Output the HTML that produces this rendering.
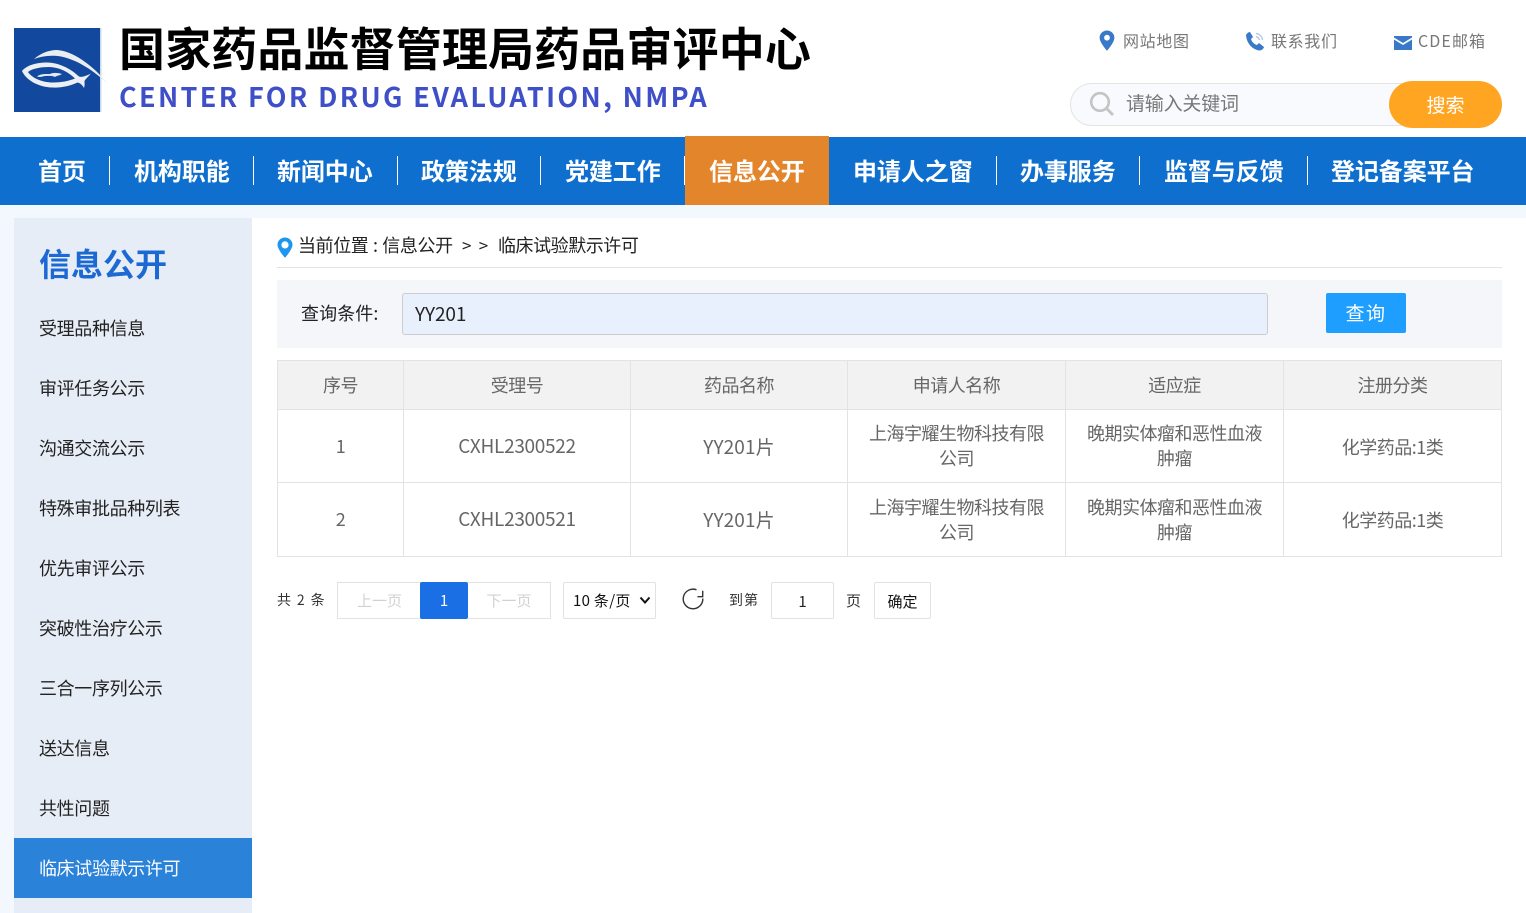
<!DOCTYPE html>
<html lang="zh-CN"><head><meta charset="utf-8"><title>临床试验默示许可</title>
<style>
*{box-sizing:border-box}
html,body{margin:0;padding:0}
body{width:1526px;height:913px;position:relative;overflow:hidden;background:#fff;font-family:"Noto Sans CJK SC","Liberation Sans",sans-serif;color:#333}
.a{position:absolute;white-space:nowrap}
.nav{position:absolute;left:0;top:137px;width:1526px;height:68px;background:#0f6fce}
.ni{position:absolute;top:153px;height:34px;line-height:34px;color:#fff;font-size:24px;font-weight:700;letter-spacing:-.1px;text-align:center;white-space:nowrap}
.sep{position:absolute;top:156px;width:1px;height:29px;background:#fff}
.s{position:absolute;left:39px;font-size:18px;line-height:26px;letter-spacing:-.35px;color:#222;white-space:nowrap}
.c{position:absolute;border-right:1px solid #e3e3e3;border-bottom:1px solid #e3e3e3;display:flex;align-items:center;justify-content:center;text-align:center;font-size:18px;line-height:25px;color:#666;letter-spacing:-.5px;padding:0 18px}
.h{background:#f2f2f2;color:#666}
.p{position:absolute;font-size:14px;white-space:nowrap;text-align:center}
.l{font-size:19px;letter-spacing:-.3px;position:relative;top:-1px}
.y{font-size:19px;letter-spacing:.1px}
.k{position:relative;top:1px}
</style></head><body>

<svg class="a" style="left:14px;top:28px" width="96" height="86" viewBox="0 0 96 86">
<rect width="86" height="84" fill="#12489d"/>
<rect x="86" width="1.500" height="84" fill="#c9d8ec"/>
<path d="M20 31C27 25 35 22 43 22C58 23 78 36 94 56C80 43 64 32 47 28.500C37 27 28 28 20 31Z" fill="#e9edf2"/>
<path d="M8 43C13 37 23 34.500 33 34.500C44 34.500 56 40 65 48.500C68 49.500 72 48 77 45.500C74 49 71.500 51 70.500 53C70.500 55 71 57 70 60C68.500 57 66 55 63.500 54.500C56 58 47 60 38 59.500C24 59 12 52 8 43ZM14 44C18 50 28 54.500 39 54.500C47 54.500 55 53 61 50.500C54 43.500 44 39 35 39C27 39 18 40.500 14 44Z" fill="#eceff3"/>
<path d="M23 48.500C27 45.500 31 46 36 46C39 44.500 43 44.500 48 46C46 47.500 43 47.500 41 49C38 47.500 35 48 31 48C28 48.500 26 49.500 23 48.500Z" fill="#e4e9f0"/>
</svg>
<div class="a" style="left:119px;top:15px;font-size:46px;line-height:64px;font-weight:700;color:#000;letter-spacing:.13px">国家药品监督管理局药品审评中心</div>
<div class="a" style="left:119px;top:79px;font-size:27px;line-height:34px;font-weight:700;color:#3e4fc7;letter-spacing:2.340px">CENTER FOR DRUG EVALUATION, NMPA</div>

<svg class="a" style="left:1099px;top:30px" width="16" height="21" viewBox="0 0 16 21"><path d="M8 0.5C3.8 0.5 0.6 3.7 0.6 7.8C0.6 12.6 8 20.8 8 20.8S15.4 12.6 15.4 7.8C15.4 3.7 12.2 0.5 8 0.500ZM8 10.600A2.900 2.900 0 1 1 8 4.800A2.900 2.900 0 0 1 8 10.600Z" fill="#3a78c9"/></svg>
<div class="a" style="left:1123px;top:29px;font-size:16px;line-height:23px;color:#777;letter-spacing:.65px">网站地图</div>
<svg class="a" style="left:1245px;top:31px" width="20" height="20" viewBox="0 0 20 20"><path d="M1 4C2 2 3.500 1 5 1L8 6L6 8C7 11 9 13 12 14L14 12L19 16C18.500 18 16.500 19.500 14.500 19.500C7 18.500 1.500 12 1 4Z" fill="#3a78c9"/><path d="M11 2.500C14.500 3 17 5.500 17.500 9M11 5.500C12.800 6 14 7.200 14.500 9" fill="none" stroke="#a9c4e6" stroke-width="1.300"/></svg>
<div class="a" style="left:1271px;top:29px;font-size:16px;line-height:23px;color:#777;letter-spacing:.65px">联系我们</div>
<svg class="a" style="left:1394px;top:36px" width="18" height="14" viewBox="0 0 18 14"><path d="M0 0H18V1.500L9 7L0 1.500Z" fill="#3a78c9"/><path d="M0 3.500L9 9L18 3.500V14H0Z" fill="#3a78c9"/></svg>
<div class="a" style="left:1418px;top:29px;font-size:16px;line-height:23px;color:#777;letter-spacing:1.100px">CDE邮箱</div>

<div class="a" style="left:1070px;top:83px;width:420px;height:43px;border:1px solid #e3e3e3;border-radius:22px;background:#f8fafe"></div>
<svg class="a" style="left:1089px;top:91px" width="26" height="26" viewBox="0 0 26 26"><circle cx="11" cy="11" r="8.800" fill="none" stroke="#c4c4c4" stroke-width="2.600"/><path d="M18 18L24 24" stroke="#c4c4c4" stroke-width="2.800"/></svg>
<div class="a" style="left:1126px;top:89px;font-size:19px;line-height:28px;color:#777;letter-spacing:-.2px">请输入关键词</div>
<div class="a" style="left:1389px;top:81px;width:113px;height:47px;border-radius:24px;background:#ffa522;color:#fff;font-size:19px;line-height:47px;text-align:center">搜索</div>

<div class="nav"></div>
<div class="a" style="left:685px;top:136px;width:144px;height:69px;background:#e3852b"></div>
<div class="ni" style="left:38px">首页</div><div class="sep" style="left:109px"></div>
<div class="ni" style="left:134px">机构职能</div><div class="sep" style="left:253px"></div>
<div class="ni" style="left:277px">新闻中心</div><div class="sep" style="left:397px"></div>
<div class="ni" style="left:421px">政策法规</div><div class="sep" style="left:540px"></div>
<div class="ni" style="left:565px">党建工作</div><div class="sep" style="left:684px"></div>
<div class="ni" style="left:709px">信息公开</div>
<div class="ni" style="left:853px">申请人之窗</div><div class="sep" style="left:996px"></div>
<div class="ni" style="left:1020px">办事服务</div><div class="sep" style="left:1139px"></div>
<div class="ni" style="left:1164px">监督与反馈</div><div class="sep" style="left:1307px"></div>
<div class="ni" style="left:1331px">登记备案平台</div>

<div class="a" style="left:0;top:205px;width:1526px;height:13px;background:#f3f8fe"></div>
<div class="a" style="left:0;top:218px;width:14px;height:695px;background:#f3f8fe"></div>
<div class="a" style="left:14px;top:218px;width:238px;height:695px;background:#e7edf6"></div>
<div class="a" style="left:39px;top:241px;font-size:32px;line-height:44px;font-weight:700;color:#1c69d4">信息公开</div>
<div class="s" style="top:315px">受理品种信息</div>
<div class="s" style="top:375px">审评任务公示</div>
<div class="s" style="top:435px">沟通交流公示</div>
<div class="s" style="top:495px">特殊审批品种列表</div>
<div class="s" style="top:555px">优先审评公示</div>
<div class="s" style="top:615px">突破性治疗公示</div>
<div class="s" style="top:675px">三合一序列公示</div>
<div class="s" style="top:735px">送达信息</div>
<div class="s" style="top:795px">共性问题</div>
<div class="a" style="left:14px;top:838px;width:238px;height:60px;background:#2a82d9"></div>
<div class="s" style="top:855px;color:#fff">临床试验默示许可</div>

<svg class="a" style="left:277px;top:237px" width="16" height="21" viewBox="0 0 16 21"><path d="M8 0.500C3.800 0.500 0.500 3.700 0.500 7.800C0.500 12.600 8 20.800 8 20.800S15.500 12.600 15.500 7.800C15.500 3.700 12.200 0.500 8 0.500ZM8 11.500A3.600 3.600 0 1 1 8 4.300A3.600 3.600 0 0 1 8 11.500Z" fill="#1e96f0"/></svg>
<div class="a" style="left:298px;top:232px;font-size:18px;line-height:26px;color:#222;letter-spacing:-.4px;word-spacing:1px">当前位置 : 信息公开</div>
<div class="a" style="left:462px;top:232px;font-size:17px;line-height:26px;color:#222;word-spacing:3.500px">&gt; &gt;</div>
<div class="a" style="left:498px;top:232px;font-size:18px;line-height:26px;color:#222;letter-spacing:-.45px">临床试验默示许可</div>
<div class="a" style="left:277px;top:267px;width:1225px;height:1px;background:#e3e3e3"></div>

<div class="a" style="left:277px;top:280px;width:1225px;height:68px;background:#f4f6fa"></div>
<div class="a" style="left:301px;top:300px;font-size:18px;line-height:26px;color:#222;letter-spacing:.1px">查询条件:</div>
<div class="a" style="left:402px;top:293px;width:866px;height:42px;background:#e8f0fe;border:1px solid #ccc;border-radius:3px;font-size:19px;line-height:39px;padding-left:12px;color:#222;letter-spacing:-.1px">YY201</div>
<div class="a" style="left:1326px;top:293px;width:80px;height:40px;background:#1e9fff;color:#fff;font-size:19px;line-height:39px;text-align:center;border-radius:2px;letter-spacing:1.500px">查询</div>

<div class="a" style="left:277px;top:360px;width:1225px;height:197px;border-left:1px solid #e3e3e3;border-top:1px solid #e3e3e3"></div>
<div class="c h" style="left:278px;top:361px;width:126px;height:49px">序号</div>
<div class="c h" style="left:404px;top:361px;width:227px;height:49px">受理号</div>
<div class="c h" style="left:631px;top:361px;width:217px;height:49px">药品名称</div>
<div class="c h" style="left:848px;top:361px;width:218px;height:49px">申请人名称</div>
<div class="c h" style="left:1066px;top:361px;width:218px;height:49px">适应症</div>
<div class="c h" style="left:1284px;top:361px;width:218px;height:49px">注册分类</div>

<div class="c" style="left:278px;top:410px;width:126px;height:73px">1</div>
<div class="c" style="left:404px;top:410px;width:227px;height:73px"><span class="l">CXHL2300522</span></div>
<div class="c" style="left:631px;top:410px;width:217px;height:73px"><span class="y">YY201片</span></div>
<div class="c" style="left:848px;top:410px;width:218px;height:73px">上海宇耀生物科技有限公司</div>
<div class="c" style="left:1066px;top:410px;width:218px;height:73px">晚期实体瘤和恶性血液肿瘤</div>
<div class="c" style="left:1284px;top:410px;width:218px;height:73px"><span class="k">化学药品:1类</span></div>

<div class="c" style="left:278px;top:483px;width:126px;height:74px">2</div>
<div class="c" style="left:404px;top:483px;width:227px;height:74px"><span class="l">CXHL2300521</span></div>
<div class="c" style="left:631px;top:483px;width:217px;height:74px"><span class="y">YY201片</span></div>
<div class="c" style="left:848px;top:483px;width:218px;height:74px">上海宇耀生物科技有限公司</div>
<div class="c" style="left:1066px;top:483px;width:218px;height:74px">晚期实体瘤和恶性血液肿瘤</div>
<div class="c" style="left:1284px;top:483px;width:218px;height:74px"><span class="k">化学药品:1类</span></div>

<div class="a" style="left:277px;top:590px;font-size:14px;line-height:21px;color:#333;word-spacing:2.800px">共 2 条</div>
<div class="p" style="left:337px;top:582px;width:84px;height:37px;line-height:36px;border:1px solid #e2e2e2;border-right:0;color:#d2d2d2;font-size:15px">上一页</div>
<div class="p" style="left:420px;top:582px;width:48px;height:37px;line-height:37px;background:#1a6fe5;color:#fff;border-radius:2px;font-size:15px">1</div>
<div class="p" style="left:468px;top:582px;width:83px;height:37px;line-height:36px;border:1px solid #e2e2e2;border-left:0;color:#d2d2d2;font-size:15px">下一页</div>
<div class="a" style="left:563px;top:582px;width:93px;height:37px;border:1px solid #e2e2e2;border-radius:2px;font-size:15px;line-height:35px;padding-left:9px;color:#111;letter-spacing:.3px">10 条/页</div>
<svg class="a" style="left:639px;top:596px" width="12" height="9" viewBox="0 0 12 9"><path d="M1.500 1.500L6 6.500L10.500 1.500" fill="none" stroke="#111" stroke-width="2"/></svg>
<svg class="a" style="left:681px;top:587px" width="24" height="24" viewBox="0 0 24 24"><path d="M15.500 2.800A9.800 9.800 0 1 0 21.800 11.500" fill="none" stroke="#333" stroke-width="1.400"/><path d="M21.700 3.700V9.700H16.500" fill="none" stroke="#333" stroke-width="1.400"/></svg>
<div class="a" style="left:729px;top:590px;font-size:14px;line-height:21px;color:#333;letter-spacing:1px">到第</div>
<div class="p" style="left:771px;top:582px;width:63px;height:37px;line-height:37px;border:1px solid #e2e2e2;border-radius:2px;color:#222;font-size:15px">1</div>
<div class="a" style="left:846px;top:590px;font-size:15px;line-height:21px;color:#333">页</div>
<div class="p" style="left:874px;top:582px;width:57px;height:37px;line-height:38px;border:1px solid #e2e2e2;border-radius:2px;color:#111;font-size:15px">确定</div>
</body></html>
